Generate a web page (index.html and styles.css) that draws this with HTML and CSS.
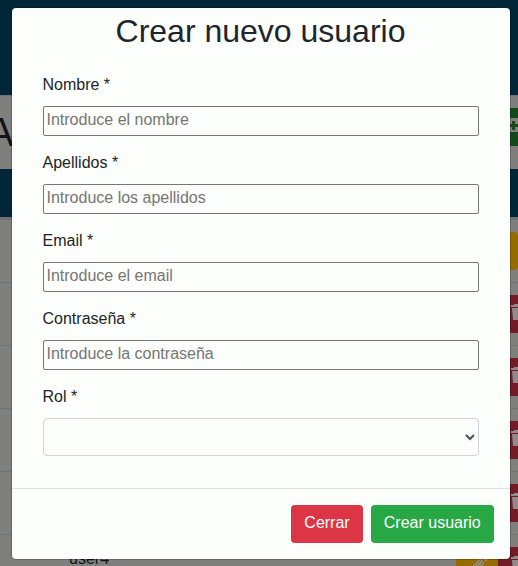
FILE: index.html
```html
<!DOCTYPE html>
<html lang="es">
<head>
<meta charset="utf-8">
<title>Crear nuevo usuario</title>
<link rel="stylesheet" href="styles.css">
</head>
<body>
<svg class="defs" width="0" height="0">
  <symbol id="trash" viewBox="0 0 24 24">
    <path d="M4 2h8v1h3v2H1V3h3zM2 6h12l-1 12H3z"/>
  </symbol>
  <symbol id="pencil" viewBox="0 0 24 24">
    <path d="M2 22l1.500-6L15 4.500l4.500 4.500L8 20.500zM16.500 3l2-2 4.500 4.500-2 2z"/>
    <path class="groove" d="M5 17 16 6M7 19 18 8"/>
  </symbol>
</svg>
<div class="page" aria-hidden="true">
  <header class="navbar"></header>
  <div class="heading"><span class="title">A</span><span class="export"><i class="plus"></i></span></div>
  <div class="thead"></div>
  <div class="row first"><span class="btn-edit solo"></span></div>
  <div class="row"><span class="btn-trash"><svg><use href="#trash"/></svg></span></div>
  <div class="row"><span class="btn-trash"><svg><use href="#trash"/></svg></span></div>
  <div class="row"><span class="btn-trash"><svg><use href="#trash"/></svg></span></div>
  <div class="row"><span class="btn-trash"><svg><use href="#trash"/></svg></span></div>
  <div class="row"><span class="user">user4</span><span class="btn-edit"><svg><use href="#pencil"/></svg></span><span class="btn-trash"><svg><use href="#trash"/></svg></span></div>
</div>
<div class="modal" role="dialog" aria-labelledby="modal-title">
  <h2 id="modal-title">Crear nuevo usuario</h2>
  <form class="modal-body">
    <div class="group"><label for="nombre">Nombre *</label><input id="nombre" type="text" placeholder="Introduce el nombre"></div>
    <div class="group"><label for="apellidos">Apellidos *</label><input id="apellidos" type="text" placeholder="Introduce los apellidos"></div>
    <div class="group"><label for="email">Email *</label><input id="email" type="email" placeholder="Introduce el email"></div>
    <div class="group"><label for="pass">Contraseña *</label><input id="pass" type="password" placeholder="Introduce la contraseña"></div>
    <div class="group"><label for="rol">Rol *</label><select id="rol"><option></option></select></div>
  </form>
  <footer class="modal-footer">
    <button class="btn danger" type="button">Cerrar</button>
    <button class="btn success" type="button">Crear usuario</button>
  </footer>
</div>
</body>
</html>
```
FILE: styles.css
```css
*, *::before, *::after { box-sizing: border-box; }
html, body { height: 100%; overflow: hidden; }
body {
  margin: 0;
  font: 16px/24px "Liberation Sans", Arial, sans-serif;
  color: #212529;
  background: #7f807e;
}
.defs { display: block; height: 0; }
.page { height: 566px; overflow: hidden; }
.navbar { height: 95px; background: #002637; }
.heading {
  display: flex;
  justify-content: space-between;
  align-items: flex-start;
  height: 74px;
  padding-top: 12px;
  border-top: 1px solid #737472;
}
.title { margin: 12px 0 0 -13px; font-size: 40px; line-height: 24px; color: #111315; }
.export {
  display: flex;
  align-items: center;
  width: 18px;
  height: 38px;
  margin-right: -4px;
  background: linear-gradient(#14491c 10px, #7f807e 10px 24px, #14491c 24px);
}
.plus {
  width: 9px;
  height: 9px;
  margin: -4px 0 0 5px;
  background: linear-gradient(#14491c, #14491c) center / 9px 3px no-repeat, linear-gradient(#14491c, #14491c) center / 3px 9px no-repeat;
}
.thead { height: 48px; background: #002637; }
.row {
  display: flex;
  flex: none;
  height: 63px;
  padding-top: 12px;
  border-top: 1px solid #6f7274;
  justify-content: flex-end;
}
.row.first { height: 65px; border-top: 3px solid #707376; }
.btn-edit { display: flex; align-items: center; justify-content: center; width: 42px; height: 38px; background: #946c00; }
.btn-edit.solo { border-radius: 4px; }
.btn-trash { width: 20px; height: 38px; padding: 7px 0 0 12px; background: #701b25; overflow: hidden; }
.row svg { display: block; width: 24px; height: 24px; fill: #8d8e8c; }
.groove { stroke: #946c00; stroke-width: 1; }
.user { margin: 0 auto 0 69px; color: #111315; }
.modal {
  position: absolute;
  top: 8px;
  left: 12px;
  width: 498px;
  height: 551px;
  border-radius: 4px;
  background: #fcfefb;
  box-shadow: 0 0 0 1px rgba(0, 0, 0, .2);
}
h2 { margin: 0; padding: 4px 1px 0 0; font-size: 32px; font-weight: 400; line-height: 38px; text-align: center; }
.modal-body { height: 438px; padding: 23px 31px 0; }
.group { margin-bottom: 15px; }
label { display: block; margin: 0 0 9px -.5px; }
.group input {
  display: block;
  width: 436px;
  height: 30px;
  margin: 0;
  padding: 0 2px 2px 2.5px;
  border: 1px solid #767676;
  border-radius: 2px;
  background: #fcfefb;
  font: inherit;
}
input::placeholder { color: #757575; }
select {
  display: block;
  width: 436px;
  height: 38px;
  border: 1px solid #ced4da;
  border-radius: 4px;
  background: #fcfefb;
  color: #495057;
  font: inherit;
}
.modal-footer { display: flex; justify-content: flex-end; gap: 8px; padding: 16px; border-top: 1px solid #dee2e6; }
.btn { height: 38px; padding: 5px 12px 7px; border: 1px solid transparent; border-radius: 4px; color: #fff; font: inherit; white-space: nowrap; }
.danger { width: 72px; background: #dc3545; }
.success { width: 123px; padding-left: 11.5px; background: #28a745; }
```
